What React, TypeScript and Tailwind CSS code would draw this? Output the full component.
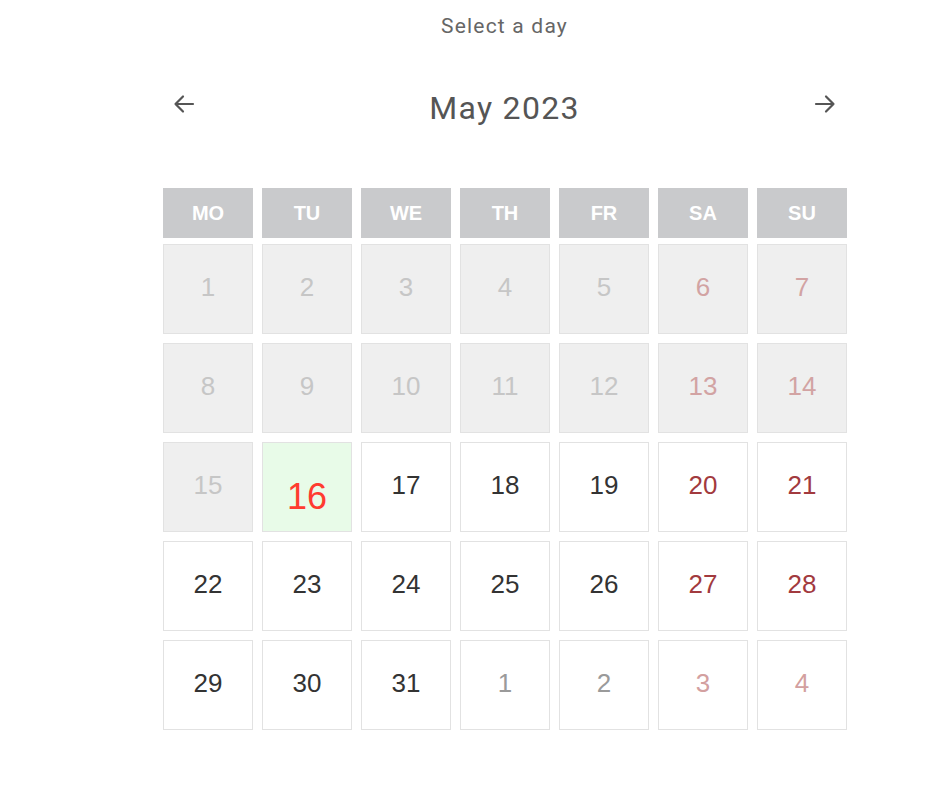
import React from "react";

type Cell = { n: number; kind: "past" | "pastWe" | "cur" | "curWe" | "today" | "next" | "nextWe" };

const days = ["MO", "TU", "WE", "TH", "FR", "SA", "SU"];

function buildCells(): Cell[] {
  const cells: Cell[] = [];
  for (let i = 1; i <= 35; i++) {
    const col = (i - 1) % 7;
    const we = col >= 5;
    if (i <= 31) {
      if (i < 16) cells.push({ n: i, kind: we ? "pastWe" : "past" });
      else if (i === 16) cells.push({ n: i, kind: "today" });
      else cells.push({ n: i, kind: we ? "curWe" : "cur" });
    } else {
      cells.push({ n: i - 31, kind: we ? "nextWe" : "next" });
    }
  }
  return cells;
}

const cls: Record<Cell["kind"], string> = {
  past: "bg-[#efefef] text-[#c6c6c6]",
  pastWe: "bg-[#efefef] text-[#d2a3a3]",
  cur: "bg-white text-[#333333]",
  curWe: "bg-white text-[#a23a3e]",
  today: "bg-[#e8fbe8] text-[#ff3b30]",
  next: "bg-white text-[#9a9a9a]",
  nextWe: "bg-white text-[#d3a0a0]",
};

export default function App() {
  const cells = buildCells();
  return (
    <div className="w-[932px] h-[806px] bg-white" style={{ fontFamily: "'Liberation Sans', Arial, sans-serif" }}>
      <div className="ml-[163px] w-[683px]">
        <p
          className="pt-[13px] text-center text-[21px] leading-[26px] tracking-[1.2px] text-[#666666]"
          style={{ fontFamily: "Roboto, sans-serif" }}
        >
          Select a day
        </p>
        <div className="mt-[48px] flex h-[44px] items-center justify-between px-[9px]">
          <svg className="-mt-[10px]" width="24" height="24" viewBox="0 0 24 24" fill="none" stroke="#555555" strokeWidth="2.2" strokeLinecap="round" strokeLinejoin="round">
            <path d="M21 12H3.5M11 4.5L3.5 12L11 19.5" />
          </svg>
          <h1
            className="text-[32px] leading-[44px] tracking-[1.3px] text-[#555555] -mt-[2px]"
            style={{ fontFamily: "Roboto, sans-serif" }}
          >
            May 2023
          </h1>
          <svg className="-mt-[10px]" width="24" height="24" viewBox="0 0 24 24" fill="none" stroke="#555555" strokeWidth="2.2" strokeLinecap="round" strokeLinejoin="round">
            <path d="M3 12H20.5M13 4.5L20.5 12L13 19.5" />
          </svg>
        </div>
        <div className="mt-[57px] grid grid-cols-[repeat(7,90px)] gap-x-[9px]">
          {days.map((d) => (
            <div key={d} className="flex h-[50px] items-center justify-center bg-[#c9cacc] text-[20px] font-bold text-white">
              {d}
            </div>
          ))}
        </div>
        <div className="mt-[6px] grid grid-cols-[repeat(7,90px)] gap-x-[9px] gap-y-[9px]">
          {cells.map((c, i) => (
            <div
              key={i}
              className={`flex h-[90px] items-center justify-center border border-[#e2e2e2] ${cls[c.kind]} ${
                c.kind === "today" ? "pt-[20px] text-[36px]" : "pb-[4px] text-[26px]"
              }`}
            >
              {c.n}
            </div>
          ))}
        </div>
      </div>
    </div>
  );
}
